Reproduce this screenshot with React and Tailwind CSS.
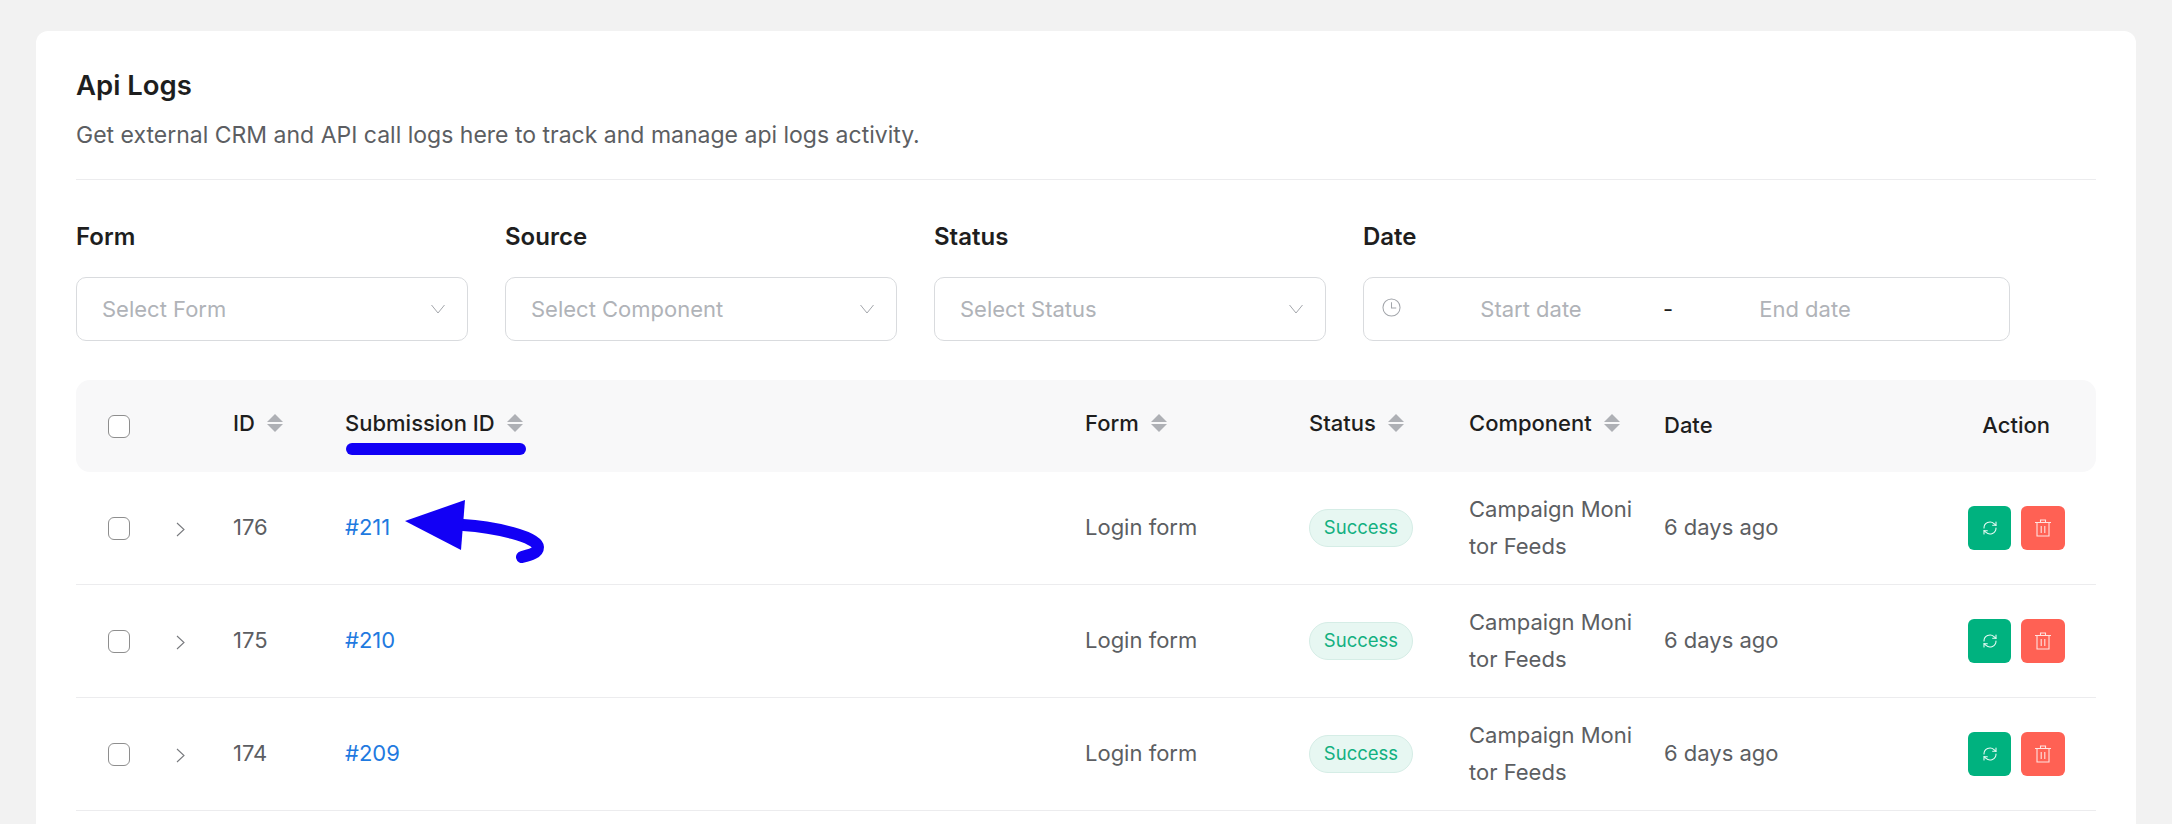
import React from "react";

const FONT = "font-['Inter','Liberation_Sans',sans-serif]";
const GRID = "grid grid-cols-[157px_112px_740px_224px_160px_195px_200px_1fr] items-center";

function Chevron({ className }) {
  return (
    <svg viewBox="0 0 14 10" className={className} fill="none" stroke="#a3a6ab" strokeWidth="1">
      <path d="M0.5 1l6.5 8 6.5-8" />
    </svg>
  );
}

function Select({ placeholder }) {
  return (
    <div className="flex h-[64px] w-[392px] items-center justify-between rounded-[10px] border border-[#d9dbde] bg-white pl-[25px] pr-[22px] text-[22px] text-[#b0b3b8]">
      <span>{placeholder}</span>
      <Chevron className="h-[10px] w-[14px]" />
    </div>
  );
}

function Filter({ label, children }) {
  return (
    <div className="flex flex-col">
      <div className="mb-[26px] h-[28px] text-[24px] font-semibold leading-[28px] text-[#1e1e1e]">{label}</div>
      {children}
    </div>
  );
}

function Sort() {
  return (
    <svg viewBox="0 0 16 18" className="ml-[12px] h-[18px] w-[16px] shrink-0" fill="#aeb0b5">
      <path d="M8 0l8 8H0z" />
      <path d="M8 18L0 10h16z" />
    </svg>
  );
}

function Box() {
  return <div className="h-[23px] w-[22px] rounded-[6px] border border-[#8e8e8e] bg-white" />;
}

function Head({ children, sort = true }) {
  return (
    <div className={`flex items-center text-[22px] font-medium text-[#1e1e1e] ${sort ? "pb-[6px]" : "pb-[2px]"}`}>
      <span>{children}</span>
      {sort && <Sort />}
    </div>
  );
}

function Row({ id, sub, arrow }) {
  return (
    <div className={`${GRID} h-[113px] border-b border-[#ececee] text-[22px] text-[#5c5e62]`}>
      <div className="flex items-center pl-[32px]">
        <Box />
        <svg viewBox="0 0 9 15" className="ml-[46px] mt-[3px] h-[15px] w-[9px]" fill="none" stroke="#77797d" strokeWidth="1.1">
          <path d="M1 1l7 6.5L1 14" />
        </svg>
      </div>
      <div className="pb-[2px]">{id}</div>
      <div className="relative pb-[2px] text-[#1f7ae0]">
        {sub}
        {arrow && (
          <svg viewBox="0 0 160 80" className="absolute left-[50px] top-[-22px] h-[80px] w-[160px]">
            <path d="M68 36C100 38 143 48 143 58C143 64 135 66 127 68" fill="none" stroke="#1200f5" strokeWidth="12" strokeLinecap="round" />
            <path d="M10 32L70 11L66 61Z" fill="#1200f5" />
          </svg>
        )}
      </div>
      <div className="pb-[2px]">Login form</div>
      <div>
        <span className="inline-flex h-[38px] w-[104px] items-center justify-center rounded-full border border-[#d5ede6] bg-[#e7f7f2] text-[18.5px] text-[#12b080]">Success</span>
      </div>
      <div className="w-[165px] break-all leading-[37px]">Campaign Monitor Feeds</div>
      <div className="pb-[2px]">6 days ago</div>
      <div className="flex justify-end gap-[10px] pr-[31px]">
        <button className="flex h-[44px] w-[43px] items-center justify-center rounded-[6px] bg-[#00b27f]">
          <svg viewBox="0 0 24 24" className="h-[16px] w-[16px]" fill="none" stroke="#e9fbf5" strokeWidth="1.6" strokeLinecap="round" strokeLinejoin="round">
            <path d="M3 12a9 9 0 0 1 15-6.7L21 8" />
            <path d="M21 3v5h-5" />
            <path d="M21 12a9 9 0 0 1-15 6.7L3 16" />
            <path d="M3 21v-5h5" />
          </svg>
        </button>
        <button className="flex h-[44px] w-[44px] items-center justify-center rounded-[6px] bg-[#ff6154]">
          <svg viewBox="0 0 16 18" className="h-[18px] w-[16px]" fill="none" stroke="#ffe3e0" strokeWidth="1.1">
            <path d="M0 3.5h16M2 3.5V17h12V3.5M5.5 3.5V1h5v2.5M6.2 7v7M9.8 7v7" />
          </svg>
        </button>
      </div>
    </div>
  );
}

export default function App() {
  return (
    <div className={`${FONT} h-[824px] w-[2172px] overflow-hidden bg-[#f2f2f2] pl-[36px] pr-[36px] pt-[31px]`}>
      <div className="h-[793px] rounded-t-[12px] bg-white px-[40px] pt-[36px]">
        <h1 className="h-[36px] text-[27.5px] font-semibold leading-[36px] text-[#1e1e1e]">Api Logs</h1>
        <p className="mt-[17px] h-[30px] text-[23px] leading-[30px] text-[#5c5e62]">Get external CRM and API call logs here to track and manage api logs activity.</p>
        <div className="mt-[29px] border-t border-[#ececee]" />
        <div className="mt-[43px] flex gap-[37px]">
          <Filter label="Form"><Select placeholder="Select Form" /></Filter>
          <Filter label="Source"><Select placeholder="Select Component" /></Filter>
          <Filter label="Status"><Select placeholder="Select Status" /></Filter>
          <Filter label="Date">
            <div className="flex h-[64px] w-[647px] items-center rounded-[10px] border border-[#d9dbde] bg-white pl-[18px] text-[22px] text-[#b0b3b8]">
              <svg viewBox="0 0 20 20" className="mb-[3px] h-[19px] w-[19px]" fill="none" stroke="#a3a6ab" strokeWidth="1.1">
                <circle cx="10" cy="10" r="9" />
                <path d="M10 4.5V10.5H15" />
              </svg>
              <span className="ml-[30px] w-[200px] text-center">Start date</span>
              <span className="w-[74px] text-center text-[#1e1e1e]">-</span>
              <span className="w-[200px] text-center">End date</span>
            </div>
          </Filter>
        </div>
        <div className="mt-[39px]">
          <div className={`${GRID} h-[92px] rounded-[14px] bg-[#f8f8f9]`}>
            <div className="flex items-center pl-[32px]"><Box /></div>
            <Head>ID</Head>
            <div className="relative">
              <Head>Submission ID</Head>
              <div className="absolute left-[1px] top-[36px] h-[12px] w-[180px] rounded-full bg-[#1200f5]" />
            </div>
            <Head>Form</Head>
            <Head>Status</Head>
            <Head>Component</Head>
            <Head sort={false}>Date</Head>
            <div className="flex justify-end pb-[1px] pr-[46px] text-[22px] font-medium text-[#1e1e1e]">Action</div>
          </div>
          <Row id="176" sub="#211" arrow />
          <Row id="175" sub="#210" />
          <Row id="174" sub="#209" />
        </div>
      </div>
    </div>
  );
}
